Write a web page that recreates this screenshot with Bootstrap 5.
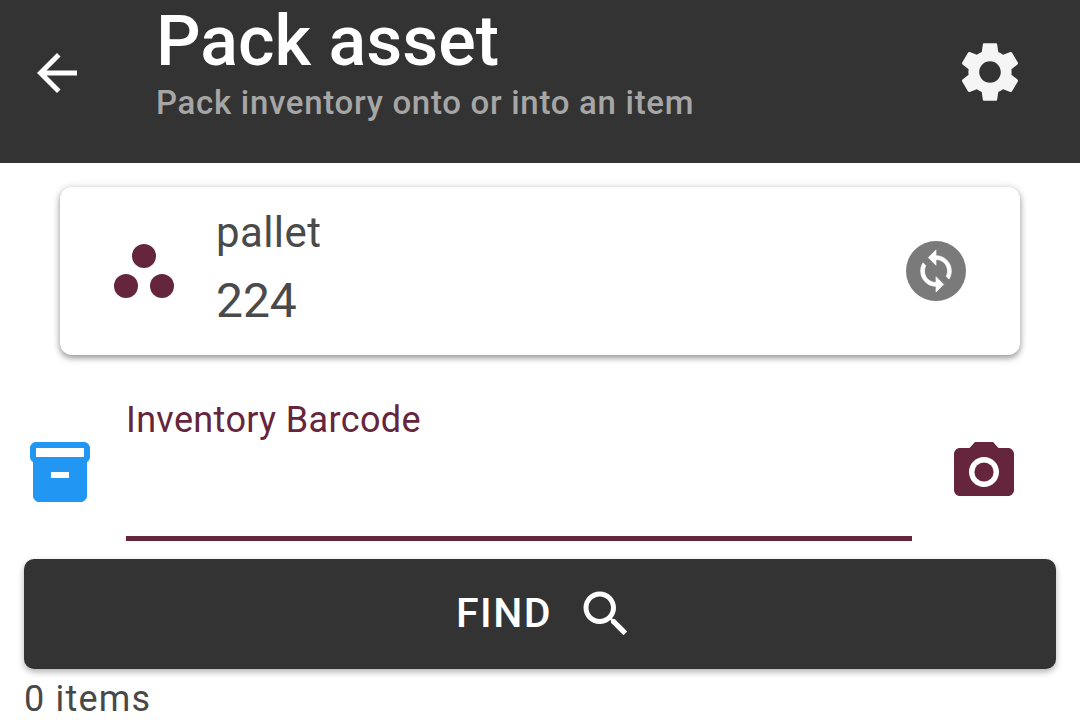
<!DOCTYPE html>
<html lang="en">
<head>
<meta charset="utf-8">
<title>Pack asset</title>
<link href="https://cdn.jsdelivr.net/npm/bootstrap@5.3.0/dist/css/bootstrap.min.css" rel="stylesheet">
<style>
html,body{height:720px;overflow:hidden;background:#fff}
body{font-family:Roboto,"Liberation Sans",sans-serif;color:#424242}
.app-head{height:163px;background:#333;color:#fff}
.head-back{width:60px;height:60px;margin:43px 0 0 27px;fill:#fff}
.head-text{margin-left:69px}
.head-title{font-size:70px;font-weight:500;line-height:82px;margin:0;color:#fff;letter-spacing:0}
.head-sub{font-size:33px;font-weight:500;line-height:40px;color:#a6a6a6;letter-spacing:.7px;margin-top:1px}
.head-gear{width:72px;height:72px;margin:36px 54px 0 auto;fill:#f5f5f5}
.asset-card{margin:24px 60px 0;height:168px;border:0;border-radius:12px;box-shadow:0 3px 6px rgba(0,0,0,.38),0 0 10px rgba(0,0,0,.1)}
.asset-icon{width:72px;height:72px;margin-left:48px;fill:#65253c}
.asset-text{margin-left:36px;color:#4a4a4a}
.asset-type{font-size:42px;line-height:50px;letter-spacing:.4px;margin-top:-6px}
.asset-num{font-size:48px;line-height:56px;margin-top:15px;letter-spacing:-.1px}
.sync-disc{width:60px;height:60px;margin-right:54px;background:#7a7a7a;border-radius:50%}
.sync-disc svg{width:46px;height:46px;fill:#fff;stroke:#fff;stroke-width:.35}
.field-row{height:186px}
.box-icon{width:72px;height:72px;margin:81px 0 0 24px;fill:#2196f3}
.field-body{margin-left:30px;width:786px;height:186px}
.field-label{font-size:36px;line-height:44px;padding-top:43px;box-sizing:content-box;color:#65253c;letter-spacing:.35px}
.field-line{height:5px;background:#65253c;margin-top:94px}
.cam-icon{width:72px;height:72px;margin:81px 0 0 36px;fill:#65253c}
.find-btn{margin:18px 24px 0;width:1032px;height:110px;padding:0 0 0 12px;background:#333;border:0;border-radius:10px;color:#fff;font-size:41px;font-weight:500;letter-spacing:1.5px;box-shadow:0 3px 6px rgba(0,0,0,.3)}
.find-btn:hover{background:#333;color:#fff}
.find-btn svg{width:60px;height:60px;fill:#fff;margin-left:24px}
.count-line{margin:8px 0 0 24px;font-size:36px;line-height:44px;color:#484848;letter-spacing:1.2px}
</style>
</head>
<body>
<header class="app-head d-flex align-items-start">
  <svg class="head-back flex-shrink-0" viewBox="0 0 24 24"><path d="M20 11H7.83l5.59-5.59L12 4l-8 8 8 8 1.41-1.41L7.83 13H20v-2z"/></svg>
  <div class="head-text">
    <h1 class="head-title">Pack asset</h1>
    <div class="head-sub">Pack inventory onto or into an item</div>
  </div>
  <svg class="head-gear flex-shrink-0" viewBox="0 0 24 24"><path d="M19.14 12.94c.04-.3.06-.61.06-.94 0-.32-.02-.64-.07-.94l2.03-1.58c.18-.14.23-.41.12-.61l-1.92-3.32c-.12-.22-.37-.29-.59-.22l-2.39.96c-.5-.38-1.03-.7-1.62-.94l-.36-2.54c-.04-.24-.24-.41-.48-.41h-3.84c-.24 0-.43.17-.47.41l-.36 2.54c-.59.24-1.13.57-1.62.94l-2.39-.96c-.22-.08-.47 0-.59.22L2.74 8.87c-.12.21-.08.47.12.61l2.03 1.58c-.05.3-.09.63-.09.94s.02.64.07.94l-2.03 1.58c-.18.14-.23.41-.12.61l1.92 3.32c.12.22.37.29.59.22l2.39-.96c.5.38 1.03.7 1.62.94l.36 2.54c.05.24.24.41.48.41h3.84c.24 0 .44-.17.47-.41l.36-2.54c.59-.24 1.13-.56 1.62-.94l2.39.96c.22.08.47 0 .59-.22l1.92-3.32c.12-.22.07-.47-.12-.61l-2.01-1.58zM12 15.6c-1.98 0-3.6-1.62-3.6-3.6s1.62-3.6 3.6-3.6 3.6 1.62 3.6 3.6-1.62 3.6-3.6 3.6z"/></svg>
</header>

<main>
  <div class="card asset-card flex-row align-items-center">
    <svg class="asset-icon flex-shrink-0" viewBox="0 0 24 24"><circle cx="12" cy="7" r="4"/><circle cx="6" cy="17" r="4"/><circle cx="18" cy="17" r="4"/></svg>
    <div class="asset-text">
      <div class="asset-type">pallet</div>
      <div class="asset-num">224</div>
    </div>
    <div class="sync-disc ms-auto d-flex align-items-center justify-content-center">
      <svg viewBox="0 0 24 24"><path d="M12 4V1L8 5l4 4V6c3.31 0 6 2.69 6 6 0 1.01-.25 1.97-.7 2.8l1.46 1.46C19.54 15.03 20 13.57 20 12c0-4.42-3.58-8-8-8zm0 14c-3.31 0-6-2.69-6-6 0-1.01.25-1.97.7-2.8L5.24 7.74C4.46 8.97 4 10.43 4 12c0 4.42 3.58 8 8 8v3l4-4-4-4v3z"/></svg>
    </div>
  </div>

  <div class="field-row d-flex align-items-start">
    <svg class="box-icon flex-shrink-0" viewBox="0 0 24 24"><path d="M20 2H4c-1 0-2 .9-2 2v3.01c0 .72.43 1.34 1 1.69V20c0 1.1 1.1 2 2 2h14c.9 0 2-.9 2-2V8.7c.57-.35 1-.97 1-1.69V4c0-1.1-1-2-2-2zm-5 12H9v-2h6v2zm5-7H4V4l16-.02V7z"/></svg>
    <div class="field-body flex-shrink-0">
      <div class="field-label">Inventory Barcode</div>
      <div class="field-line"></div>
    </div>
    <svg class="cam-icon flex-shrink-0" viewBox="0 0 24 24"><path d="M9 2L7.17 4H4c-1.1 0-2 .9-2 2v12c0 1.1.9 2 2 2h16c1.1 0 2-.9 2-2V6c0-1.1-.9-2-2-2h-3.17L15 2H9zm3 15c-2.76 0-5-2.24-5-5s2.24-5 5-5 5 2.24 5 5-2.24 5-5 5z"/><circle cx="12" cy="12" r="3.2"/></svg>
  </div>

  <button type="button" class="btn find-btn d-flex align-items-center justify-content-center">FIND<svg viewBox="0 0 24 24"><path d="M15.5 14h-.79l-.28-.27C15.41 12.59 16 11.11 16 9.5 16 5.91 13.09 3 9.5 3S3 5.91 3 9.5 5.91 16 9.5 16c1.61 0 3.09-.59 4.23-1.57l.27.28v.79l5 4.99L20.49 19l-4.99-5zm-6 0C7.01 14 5 11.99 5 9.5S7.01 5 9.5 5 14 7.01 14 9.5 11.99 14 9.5 14z"/></svg></button>

  <div class="count-line">0 items</div>
</main>
<script src="https://cdn.jsdelivr.net/npm/bootstrap@5.3.0/dist/js/bootstrap.bundle.min.js"></script>
</body>
</html>
